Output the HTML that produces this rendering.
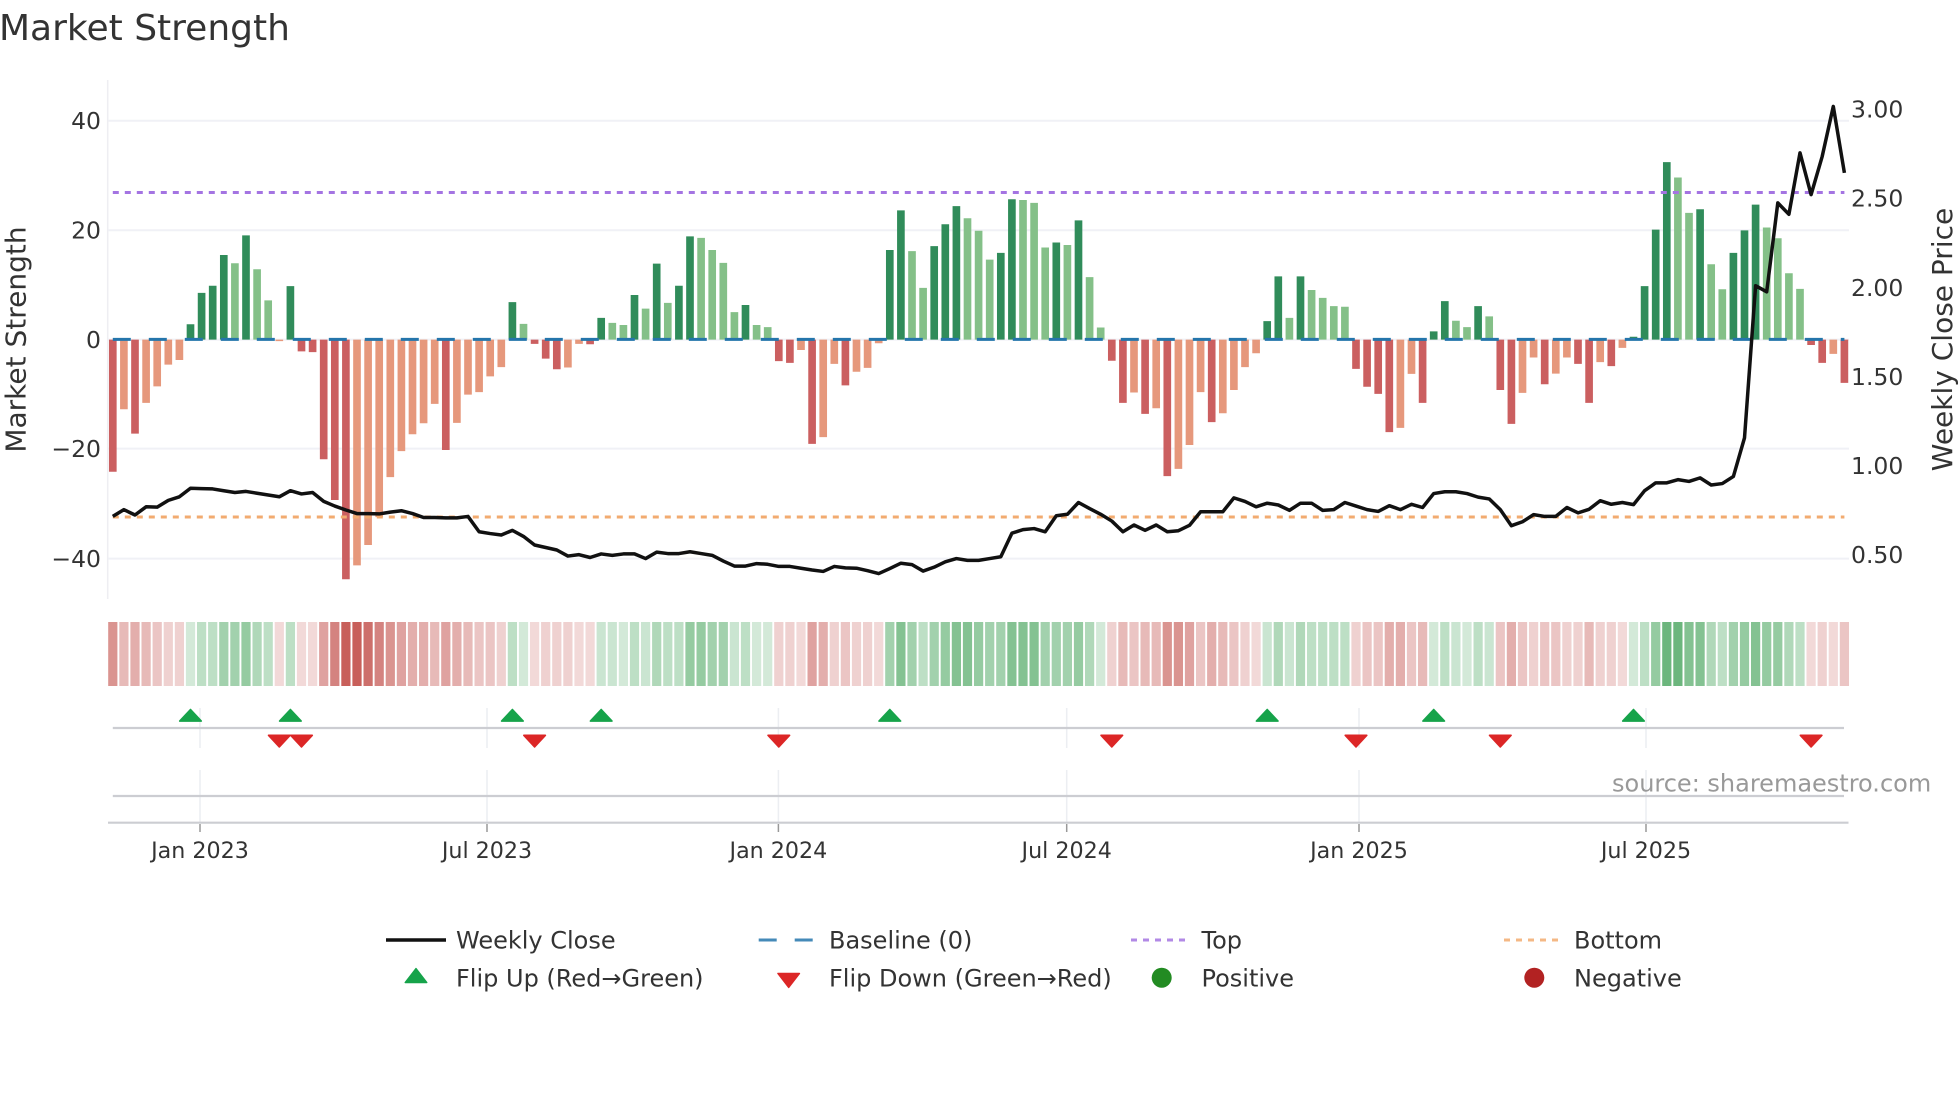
<!DOCTYPE html>
<html lang="en">
<head>
<meta charset="utf-8">
<title>Market Strength</title>
<style>
html,body{margin:0;padding:0;background:#fff;width:1960px;height:1102px;overflow:hidden}
svg{display:block}
text{font-family:"DejaVu Sans","Liberation Sans",sans-serif;fill:#333}
.t{font-size:22.2px}
.y{font-size:23.5px}
.l{font-size:24px}
.a{font-size:28px}
</style>
</head>
<body>
<svg width="1960" height="1102" viewBox="0 0 1960 1102" xmlns="http://www.w3.org/2000/svg">
<rect width="1960" height="1102" fill="#fff"/>
<text x="-1" y="40" font-size="36">Market Strength</text>

<!-- grid -->
<path d="M107.7 80V599" stroke="#eeeeF2" stroke-width="1.5" fill="none"/>
<path d="M108 120.7H1849M108 230.3H1849M108 339.6H1849M108 448.6H1849M108 558.6H1849" stroke="#f0f1f6" stroke-width="2" fill="none"/>

<!-- bars -->
<g transform="translate(112.8,60) scale(11.1,.35714)" fill="none" stroke-width=".69">
<path stroke="#308c5a" d="M7 783V740M8 783V652M9 783V632M10 783V546M12 783V491M16 783V633M36 783V678M44 783V722M47 783V658M49 783V570M51 783V632M52 783V494M57 783V686M70 783V532M71 783V421M74 783V521M75 783V460M76 783V409M80 783V540M81 783V390M85 783V511M87 783V449M104 783V731M105 783V606M107 783V606M119 783V760M120 783V675M123 783V689M137 783V775M138 783V633M139 783V475M140 783V286M143 783V418M146 783V540M147 783V477M148 783V405"/>
<path stroke="#84c088" d="M11 783V569M13 783V586M14 783V673M37 783V739M45 783V736M46 783V742M48 783V696M50 783V680M53 783V498M54 783V532M55 783V568M56 783V706M58 783V742M59 783V748M72 783V535M73 783V638M77 783V443M78 783V478M79 783V559M82 783V392M83 783V400M84 783V525M86 783V518M88 783V608M89 783V749M106 783V722M108 783V644M109 783V666M110 783V689M111 783V691M121 783V730M122 783V748M124 783V718M141 783V329M142 783V428M144 783V572M145 783V642M149 783V469M150 783V499M151 783V597M152 783V641"/>
<path stroke="#cb5f60" d="M0 783V1153M2 783V1046M17 783V816M18 783V818M19 783V1118M20 783V1232M21 783V1454M30 783V1092M38 783V795M39 783V836M40 783V866M43 783V796M60 783V843M61 783V848M63 783V1075M66 783V911M90 783V842M91 783V960M93 783V991M95 783V1165M99 783V1014M112 783V865M113 783V915M114 783V935M115 783V1042M118 783V960M125 783V924M126 783V1019M129 783V908M132 783V851M133 783V960M135 783V857M153 783V798M154 783V848M156 783V904"/>
<path stroke="#e6987c" d="M1 783V978M3 783V960M4 783V914M5 783V853M6 783V840M15 783V787M22 783V1415M23 783V1358M24 783V1280M25 783V1168M26 783V1095M27 783V1048M28 783V1017M29 783V963M31 783V1016M32 783V937M33 783V930M34 783V886M35 783V860M41 783V861M42 783V795M62 783V812M64 783V1056M65 783V851M67 783V873M68 783V862M69 783V793M92 783V931M94 783V975M96 783V1145M97 783V1078M98 783V930M100 783V989M101 783V924M102 783V860M103 783V821M116 783V1030M117 783V879M127 783V932M128 783V833M130 783V878M131 783V833M134 783V846M136 783V806M155 783V823"/>
</g>

<!-- reference lines -->
<path d="M112.8 339.4H1844.4" stroke="#2475ab" stroke-width="3" stroke-dasharray="18 18" fill="none"/>
<path d="M112.8 192.5H1844.4" stroke="#a474e2" stroke-width="3" stroke-dasharray="6 6" fill="none"/>
<path d="M112.8 517H1844.4" stroke="#f2ab70" stroke-width="3" stroke-dasharray="6 6" fill="none"/>

<!-- weekly close -->
<g transform="translate(112.8,60) scale(11.1,.35714)">
<polyline fill="none" stroke="#111" stroke-width="3.5" stroke-linejoin="round" vector-effect="non-scaling-stroke" points="0,1278 1,1259 2,1274 3,1251 4,1252 5,1233 6,1223 7,1199 8,1200 9,1201 10,1206 11,1211 12,1208 13,1213 14,1218 15,1223 16,1206 17,1215 18,1211 19,1236 20,1249 21,1260 22,1270 23,1270 24,1271 25,1266 26,1262 27,1270 28,1281 29,1281 30,1282 31,1282 32,1278 33,1321 34,1326 35,1330 36,1317 37,1334 38,1358 39,1365 40,1372 41,1389 42,1385 43,1393 44,1383 45,1387 46,1383 47,1383 48,1396 49,1378 50,1382 51,1382 52,1377 53,1382 54,1387 55,1403 56,1417 57,1417 58,1410 59,1412 60,1418 61,1418 62,1423 63,1428 64,1432 65,1418 66,1422 67,1423 68,1430 69,1438 70,1424 71,1409 72,1413 73,1431 74,1420 75,1405 76,1396 77,1401 78,1401 79,1396 80,1391 81,1325 82,1315 83,1312 84,1321 85,1276 86,1272 87,1239 88,1256 89,1272 90,1291 91,1321 92,1302 93,1317 94,1302 95,1321 96,1318 97,1303 98,1265 99,1265 100,1265 101,1226 102,1236 103,1251 104,1241 105,1246 106,1261 107,1241 108,1241 109,1261 110,1259 111,1239 112,1249 113,1259 114,1264 115,1248 116,1259 117,1244 118,1253 119,1214 120,1209 121,1209 122,1214 123,1224 124,1229 125,1259 126,1304 127,1293 128,1273 129,1278 130,1278 131,1253 132,1268 133,1258 134,1234 135,1244 136,1239 137,1245 138,1206 139,1184 140,1184 141,1175 142,1180 143,1170 144,1190 145,1186 146,1166 147,1058 148,632 149,649 150,400 151,432 152,260 153,377 154,270 155,130 156,316"/>
</g>

<!-- heat strip -->
<g transform="translate(112.8,622) scale(11.1,1)" fill="none" stroke-width=".83">
<g stroke="#c65a55">
<path stroke-opacity=".23" d="M15 0v64M17 0v64M18 0v64M38 0v64M42 0v64M43 0v64M62 0v64M69 0v64M103 0v64M136 0v64M153 0v64M155 0v64"/>
<path stroke-opacity=".28" d="M5 0v64M6 0v64M35 0v64M39 0v64M40 0v64M41 0v64M60 0v64M61 0v64M65 0v64M67 0v64M68 0v64M90 0v64M102 0v64M112 0v64M128 0v64M131 0v64M132 0v64M134 0v64M135 0v64M154 0v64"/>
<path stroke-opacity=".35" d="M4 0v64M33 0v64M34 0v64M66 0v64M92 0v64M98 0v64M101 0v64M113 0v64M114 0v64M117 0v64M125 0v64M127 0v64M129 0v64M130 0v64M156 0v64"/>
<path stroke-opacity=".42" d="M1 0v64M3 0v64M29 0v64M32 0v64M91 0v64M93 0v64M94 0v64M100 0v64M118 0v64M133 0v64"/>
<path stroke-opacity=".49" d="M2 0v64M27 0v64M28 0v64M31 0v64M64 0v64M99 0v64M115 0v64M116 0v64M126 0v64"/>
<path stroke-opacity=".56" d="M19 0v64M26 0v64M30 0v64M63 0v64M97 0v64"/>
<path stroke-opacity=".65" d="M0 0v64M25 0v64M95 0v64M96 0v64"/>
<path stroke-opacity=".75" d="M20 0v64M24 0v64"/>
<path stroke-opacity=".87" d="M23 0v64"/>
<path stroke-opacity=".97" d="M21 0v64M22 0v64"/>
</g>
<g stroke="#42a258">
<path stroke-opacity=".23" d="M7 0v64M37 0v64M46 0v64M58 0v64M59 0v64M89 0v64M119 0v64M122 0v64M137 0v64"/>
<path stroke-opacity=".28" d="M44 0v64M45 0v64M48 0v64M56 0v64M104 0v64M106 0v64M121 0v64M124 0v64"/>
<path stroke-opacity=".35" d="M8 0v64M9 0v64M14 0v64M16 0v64M36 0v64M47 0v64M50 0v64M51 0v64M57 0v64M73 0v64M108 0v64M109 0v64M110 0v64M111 0v64M120 0v64M123 0v64M138 0v64M145 0v64M152 0v64"/>
<path stroke-opacity=".42" d="M13 0v64M49 0v64M88 0v64M105 0v64M107 0v64M144 0v64M151 0v64"/>
<path stroke-opacity=".49" d="M10 0v64M11 0v64M54 0v64M55 0v64M70 0v64M72 0v64M74 0v64M79 0v64M80 0v64M84 0v64M85 0v64M86 0v64M146 0v64"/>
<path stroke-opacity=".56" d="M12 0v64M52 0v64M53 0v64M75 0v64M78 0v64M87 0v64M139 0v64M147 0v64M149 0v64M150 0v64"/>
<path stroke-opacity=".65" d="M71 0v64M76 0v64M77 0v64M81 0v64M82 0v64M83 0v64M142 0v64M143 0v64M148 0v64"/>
<path stroke-opacity=".78" d="M140 0v64M141 0v64"/>
</g>
</g>

<!-- lower panels -->
<path d="M200 708V748M487 708V748M778.4 708V748M1066.7 708V748M1359 708V748M1646 708V748M200 770V822M487 770V822M778.4 770V822M1066.7 770V822M1359 770V822M1646 770V822" stroke="#eceef2" stroke-width="1.5" fill="none"/>
<path d="M112.8 728H1844M112.8 796H1844M108 822.7H1848.5" stroke="#cccdd2" stroke-width="2.2" fill="none"/>
<path d="M200 824V832M487 824V832M778.4 824V832M1066.7 824V832M1359 824V832M1646 824V832" stroke="#999" stroke-width="1.5" fill="none"/>

<!-- flips -->
<g fill="#16a34a" stroke="#16a34a" stroke-width="1.6" stroke-linejoin="round">
<path d="M190.5 709.5l10.8 11.6h-21.6z"/>
<path d="M290.4 709.5l10.8 11.6h-21.6z"/>
<path d="M512.4 709.5l10.8 11.6h-21.6z"/>
<path d="M601.2 709.5l10.8 11.6h-21.6z"/>
<path d="M889.8 709.5l10.8 11.6h-21.6z"/>
<path d="M1267.2 709.5l10.8 11.6h-21.6z"/>
<path d="M1433.7 709.5l10.8 11.6h-21.6z"/>
<path d="M1633.5 709.5l10.8 11.6h-21.6z"/>
</g>
<g fill="#dc2626" stroke="#dc2626" stroke-width="1.6" stroke-linejoin="round">
<path d="M279.3 746.9l10.8-11.6h-21.6z"/>
<path d="M301.5 746.9l10.8-11.6h-21.6z"/>
<path d="M534.6 746.9l10.8-11.6h-21.6z"/>
<path d="M778.8 746.9l10.8-11.6h-21.6z"/>
<path d="M1111.8 746.9l10.8-11.6h-21.6z"/>
<path d="M1356 746.9l10.8-11.6h-21.6z"/>
<path d="M1500.3 746.9l10.8-11.6h-21.6z"/>
<path d="M1811.1 746.9l10.8-11.6h-21.6z"/>
</g>

<!-- axis text -->
<g text-anchor="end">
<text class="y" x="101" y="129">40</text>
<text class="y" x="101" y="238.5">20</text>
<text class="y" x="101" y="348">0</text>
<text class="y" x="101" y="457">−20</text>
<text class="y" x="101" y="567">−40</text>
</g>
<g>
<text class="y" x="1851" y="117.5">3.00</text>
<text class="y" x="1851" y="206.5">2.50</text>
<text class="y" x="1851" y="296">2.00</text>
<text class="y" x="1851" y="385">1.50</text>
<text class="y" x="1851" y="474">1.00</text>
<text class="y" x="1851" y="563">0.50</text>
</g>
<g text-anchor="middle">
<text class="t" x="200" y="858">Jan 2023</text>
<text class="t" x="487" y="858">Jul 2023</text>
<text class="t" x="778.4" y="858">Jan 2024</text>
<text class="t" x="1066.7" y="858">Jul 2024</text>
<text class="t" x="1359" y="858">Jan 2025</text>
<text class="t" x="1646" y="858">Jul 2025</text>
</g>
<text class="a" text-anchor="middle" transform="translate(25.5,339.5) rotate(-90)">Market Strength</text>
<text class="a" text-anchor="middle" transform="translate(1952,339.5) rotate(-90)">Weekly Close Price</text>
<text class="l" x="1612" y="791.5" style="fill:#999">source: sharemaestro.com</text>

<!-- legend -->
<path d="M386 940H446" stroke="#111" stroke-width="3.5" fill="none"/>
<path d="M758.7 940H814" stroke="#2475ab" stroke-width="3" stroke-dasharray="18 18" fill="none" opacity=".85"/>
<path d="M1131 940H1186" stroke="#a474e2" stroke-width="3" stroke-dasharray="6 6" fill="none" opacity=".85"/>
<path d="M1504 940H1559" stroke="#f2ab70" stroke-width="3" stroke-dasharray="6 6" fill="none" opacity=".85"/>
<path d="M416 968.5l10.8 14h-21.6z" fill="#16a34a" stroke="#16a34a" stroke-width="1.4" stroke-linejoin="round"/>
<path d="M788.7 987.5l10.8-14h-21.6z" fill="#dc2626" stroke="#dc2626" stroke-width="1.4" stroke-linejoin="round"/>
<circle cx="1161.7" cy="977.7" r="10" fill="#228b22"/>
<circle cx="1534.3" cy="977.7" r="10" fill="#b22222"/>
<text class="l" x="456" y="948.3">Weekly Close</text>
<text class="l" x="829" y="948.3">Baseline (0)</text>
<text class="l" x="1201.5" y="948.3">Top</text>
<text class="l" x="1574" y="948.3">Bottom</text>
<text class="l" x="456" y="986.7">Flip Up (Red→Green)</text>
<text class="l" x="829" y="986.7">Flip Down (Green→Red)</text>
<text class="l" x="1201.5" y="986.7">Positive</text>
<text class="l" x="1574" y="986.7">Negative</text>
</svg>
</body>
</html>
